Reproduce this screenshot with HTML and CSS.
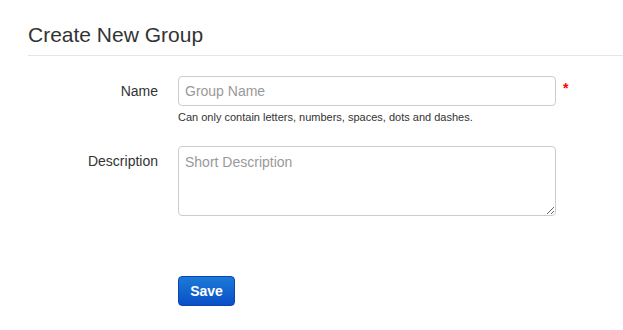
FILE: index.html
```html
<!DOCTYPE html>
<html>
<head>
<meta charset="utf-8">
<link rel="stylesheet" href="styles.css">
</head>
<body>
<div class="page">
  <h1 class="title">Create New Group</h1>
  <form class="form">
    <div class="row">
      <label class="label" for="name">Name</label>
      <div class="field">
        <div class="control-line">
          <input class="input" id="name" type="text" placeholder="Group Name">
          <span class="req">*</span>
        </div>
        <div class="help">Can only contain letters, numbers, spaces, dots and dashes.</div>
      </div>
    </div>
    <div class="row row-desc">
      <label class="label" for="desc">Description</label>
      <div class="field">
        <textarea class="textarea" id="desc" placeholder="Short Description"></textarea>
      </div>
    </div>
    <div class="row row-actions">
      <div></div>
      <div class="field">
        <button class="btn" type="button">Save</button>
      </div>
    </div>
  </form>
</div>
</body>
</html>
```

FILE: styles.css
```css
html, body {
  margin: 0;
  padding: 0;
  background: #fff;
}
body {
  font-family: "Liberation Sans", Arial, Helvetica, sans-serif;
  color: #333;
  font-size: 14px;
}
.page {
  padding-left: 28px;
}
.title {
  margin: 0;
  padding-top: 23px;
  padding-bottom: 8px;
  font-size: 21px;
  line-height: 24px;
  font-weight: normal;
  color: #333;
  border-bottom: 1px solid #e5e5e5;
}
.form {
  padding-top: 20px;
}
.row {
  display: grid;
  grid-template-columns: 130px 1fr;
  column-gap: 20px;
  align-items: start;
}
.row-desc {
  margin-top: 22px;
}
.row-actions {
  margin-top: 60px;
}
.label {
  text-align: right;
  padding-top: 6px;
  line-height: 18px;
  font-size: 14px;
  color: #333;
}
.control-line {
  display: flex;
  align-items: flex-start;
}
.input, .textarea {
  box-sizing: border-box;
  width: 378px;
  border: 1px solid #ccc;
  border-radius: 4px;
  font-family: "Liberation Sans", Arial, Helvetica, sans-serif;
  font-size: 14px;
  color: #333;
  padding: 4px 6px;
  margin: 0;
  background: #fff;
  outline: none;
}
.input {
  height: 30px;
}
.textarea {
  height: 70px;
  resize: vertical;
  display: block;
  line-height: 18px;
  padding-top: 6px;
}
.input::placeholder, .textarea::placeholder {
  color: #999;
}
.req {
  color: #f00;
  font-size: 14px;
  line-height: 14px;
  margin-left: 7px;
  margin-top: 5px;
  font-weight: bold;
}
.help {
  font-size: 11px;
  line-height: 14px;
  margin-top: 4px;
  color: #333;
}
.btn {
  width: 57px;
  height: 30px;
  border: 1px solid #0a45b0;
  border-radius: 4px;
  background: linear-gradient(#1b7ad8, #0b4fc7);
  color: #fff;
  font-family: "Liberation Sans", Arial, Helvetica, sans-serif;
  font-weight: bold;
  font-size: 14px;
  padding: 0;
  cursor: pointer;
}
```
